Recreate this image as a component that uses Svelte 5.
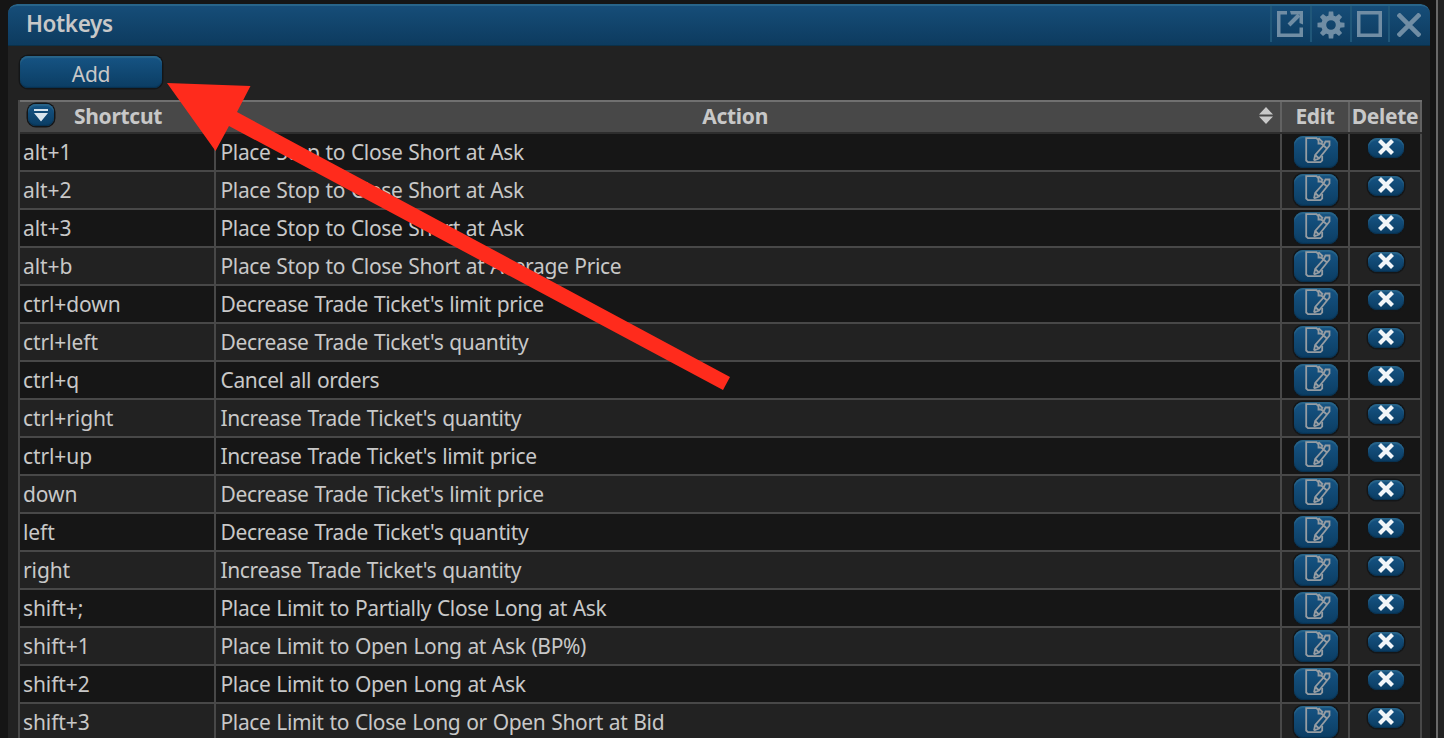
<script>
  const rows = [
    ['alt+1', 'Place Stop to Close Short at Ask'],
    ['alt+2', 'Place Stop to Close Short at Ask'],
    ['alt+3', 'Place Stop to Close Short at Ask'],
    ['alt+b', 'Place Stop to Close Short at Average Price'],
    ['ctrl+down', "Decrease Trade Ticket's limit price"],
    ['ctrl+left', "Decrease Trade Ticket's quantity"],
    ['ctrl+q', 'Cancel all orders'],
    ['ctrl+right', "Increase Trade Ticket's quantity"],
    ['ctrl+up', "Increase Trade Ticket's limit price"],
    ['down', "Decrease Trade Ticket's limit price"],
    ['left', "Decrease Trade Ticket's quantity"],
    ['right', "Increase Trade Ticket's quantity"],
    ['shift+;', 'Place Limit to Partially Close Long at Ask'],
    ['shift+1', 'Place Limit to Open Long at Ask (BP%)'],
    ['shift+2', 'Place Limit to Open Long at Ask'],
    ['shift+3', 'Place Limit to Close Long or Open Short at Bid'],
  ];
</script>

<div class="desktop">
  <section class="window">
    <header class="titlebar">
      <h1>Hotkeys</h1>
      <div class="tools">
        <span class="tool t1"><svg width="26" height="26" viewBox="0 0 26 26"><path d="M10 1.750H1.750V24.250H24.250V16.500" stroke-width="3.500" /><path d="M12 14L22 4" stroke-width="4" /><path class="solid" d="M13 0H26V13.500L22.500 12V3.500H14Z" /></svg></span>
        <span class="tool t2"><svg width="28" height="28" viewBox="-14 -14 28 28"><circle r="7.300" stroke-width="5" />{#each [0, 45, 90, 135, 180, 225, 270, 315] as a}<path class="solid" d="M-2.700 -8.500L-2.200 -13.500H2.200L2.700 -8.500Z" transform="rotate({a})" />{/each}</svg></span>
        <span class="tool t3"><svg width="25" height="26" viewBox="0 0 25 26"><rect x="1.750" y="1.750" width="21.500" height="22.500" stroke-width="3.500" /></svg></span>
        <span class="tool t4"><svg width="24" height="24" viewBox="0 0 24 24"><path d="M1 1L23 23M23 1L1 23" stroke-width="4.600" /></svg></span>
      </div>
    </header>
    <button class="blue add"><span>Add</span></button>
    <div class="table">
      <div class="row head">
        <div class="cell shortcut">
          <span class="blue sorted"><svg width="14" height="13" viewBox="0 0 14 13"><path d="M0 0H14V2H0ZM0 4H14L7 12.500Z" /></svg></span>
          <b>Shortcut</b>
        </div>
        <div class="cell action">
          <b>Action</b>
          <svg class="sort" width="14" height="17" viewBox="0 0 14 17"><path d="M7 0L14 7.500H0ZM0 9.500H14L7 17Z" /></svg>
        </div>
        <div class="cell edit"><b>Edit</b></div>
        <div class="cell delete"><b>Delete</b></div>
      </div>
      {#each rows as [key, action]}
        <div class="row">
          <div class="cell key"><span class="text">{key}</span></div>
          <div class="cell wide"><span class="text">{action}</span></div>
          <div class="cell mid">
            <button class="blue pencil" aria-label="Edit">
              <svg width="28" height="28" viewBox="0 0 28 28"><path d="M18.200 20V24.500L16.500 26.200H4L2.200 24.500V2.200H12.500L14.500 4.500M14.500 2.200V7.500H18" /><path d="M10 24.500L11.200 19L19.500 9.500L17 7M14.500 2.200L19 6.500M10 24.500L15 22.500L25.500 9.500V5.500H21.500L19.500 9.500L23 12.500M11.200 19L15 22.500" /></svg>
            </button>
          </div>
          <div class="cell mid">
            <button class="blue remove" aria-label="Delete"><svg width="18" height="16" viewBox="0 0 18 16"><path d="M2.500 1.500L15.500 14.500M15.500 1.500L2.500 14.500" /></svg></button>
          </div>
        </div>
      {/each}
    </div>
  </section>
  <svg class="arrow" width="1444" height="738" viewBox="0 0 1444 738"><path d="M167 83L250.500 86L237 112L730 377L723 390L229 126L215.500 151Z" /></svg>
</div>

<style>
  :global(body) { margin: 0; overflow: hidden; background: #151515; }
  * { box-sizing: border-box; }
  .desktop {
    width: 1444px; height: 738px; overflow: hidden; padding: 4px 0 0 8px;
    background: linear-gradient(90deg, transparent 1436px, #696969 1436px, #696969 1438px, #222 1438px), #151515;
    color: #c8c8c8; font-family: "Noto Sans", sans-serif; font-size: 21px;
  }
  .window { width: 1422px; height: 760px; background: #222; border-radius: 9px 9px 0 0; overflow: hidden; }
  .titlebar {
    height: 42px; display: flex; justify-content: space-between; padding-left: 18px;
    background: linear-gradient(#164d78, #0d3b5f); border-top: 2px solid #286489; border-bottom: 1px solid #0b3149;
    border-radius: 9px 9px 0 0;
  }
  h1 { margin: 0; font-size: 22.5px; line-height: 35px; font-weight: 600; letter-spacing: -.4px; }
  .tools { display: flex; width: 160px; height: 36px; }
  .tool { width: 40px; border-left: 2px solid #205779; padding: 5px 0 0 5px; }
  .t2 { padding: 5px 0 0 5px; }
  .t3 { width: 38px; padding-left: 5px; }
  .t4 { width: 42px; padding: 7px 0 0 7px; }
  .tool svg { display: block; fill: none; stroke: #708da4; }
  .tool .solid { fill: #708da4; stroke: none; }
  .blue {
    display: block; padding: 0; border: 0; color: inherit; font: inherit;
    background: linear-gradient(#165484, #0b3d63);
    box-shadow: 0 0 0 1.500px #141618, inset 0 2px 1px #286489, inset 0 -1px 1px #08304e;
  }
  .add { margin: 10px 0 0 12px; width: 142px; height: 32px; border-radius: 8px; }
  .add span { display: block; line-height: 37px; height: 32px; letter-spacing: -.2px; }
  .table { margin: 12px 0 0 10px; width: 1404px; border-left: 2px solid #484848; }
  .row { display: grid; grid-template-columns: 196px 1066px 68px 72px; height: 38px; background: #222; border-bottom: 2px solid #484848; }
  .row:nth-child(even) { background: #161616; }
  .cell { border-right: 2px solid #484848; height: 36px; }
  .key { padding-left: 3px; letter-spacing: -.1px; }
  .wide { padding-left: 4.500px; letter-spacing: -.37px; word-spacing: .8px; }
  .text { display: block; white-space: pre; line-height: 37px; }
  .row.head { height: 34px; background: #484848; border-top: 2px solid #707070; border-bottom: 2px solid #2d2d2d; }
  .head .cell { height: 30px; border-color: #626262; }
  .head .shortcut { display: flex; border-right: 0; }
  .head b { line-height: 29px; letter-spacing: -.3px; white-space: nowrap; }
  .sorted { width: 26px; height: 22px; border-radius: 8px; margin: 2px 20px 0 8px; padding: 5px 6px; }
  .sorted svg { display: block; margin-left: -.5px; fill: #d9e5ee; }
  .head .action { display: flex; justify-content: flex-end; align-items: flex-start; gap: 491px; padding-right: 7px; }
  .sort { margin-top: 5px; fill: #c8c8c8; flex: none; }
  .edit, .delete { text-align: center; }
  .mid { padding-left: 2px; display: flex; justify-content: center; align-items: flex-start; }
  .pencil { width: 44px; height: 32px; border-radius: 9px; margin-top: 2px; }
  .pencil svg { display: block; margin-left: 10px; margin-top: -5px; fill: none; stroke: #969da3; stroke-width: 1.800; }
  .remove { width: 36px; height: 20px; border-radius: 9px; margin-top: 4px; }
  .remove svg { display: block; margin: -2px 0 0 9px; fill: none; stroke: #f1f5f8; stroke-width: 4.200; }
  .arrow { position: absolute; left: 0; top: 0; fill: #ff2b1c; pointer-events: none; }
</style>
